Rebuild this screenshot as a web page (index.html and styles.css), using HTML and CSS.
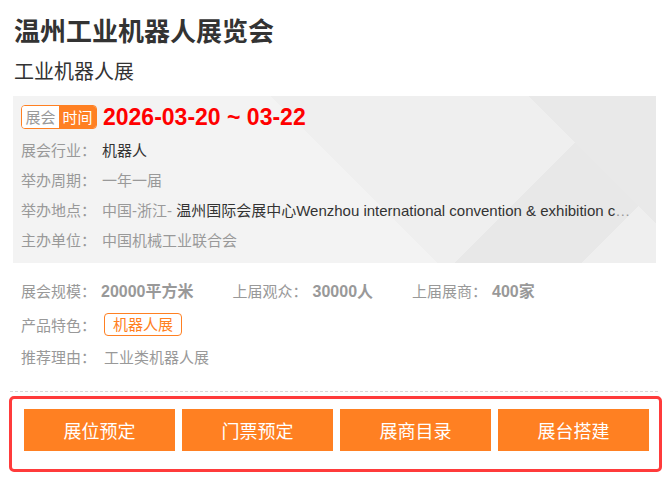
FILE: index.html
```html
<!DOCTYPE html>
<html lang="zh-CN">
<head>
<meta charset="utf-8">
<title>温州工业机器人展览会</title>
<link rel="stylesheet" href="styles.css">
</head>
<body>
<div class="page">
  <div class="header">
    <h1 class="title">温州工业机器人展览会</h1>
    <div class="subtitle">工业机器人展</div>
  </div>

  <div class="info-box">
    <div class="date-row">
      <span class="badge"><span class="badge-l">展会</span><span class="badge-r">时间</span></span>
      <span class="date">2026-03-20 ~ 03-22</span>
    </div>
    <div class="row"><span class="label">展会行业：</span><span class="val dark">机器人</span></div>
    <div class="row"><span class="label">举办周期：</span><span class="val">一年一届</span></div>
    <div class="row"><span class="label">举办地点：</span><span class="val clip"><span>中国-浙江- </span><span class="dark">温州国际会展中心Wenzhou international convention &amp; exhibition center</span></span></div>
    <div class="row"><span class="label">主办单位：</span><span class="val">中国机械工业联合会</span></div>
  </div>

  <div class="stats">
    <div class="stat-row">
      <span class="stat"><span class="slabel">展会规模：</span><b class="sval">20000平方米</b></span>
      <span class="stat"><span class="slabel">上届观众：</span><b class="sval">30000人</b></span>
      <span class="stat"><span class="slabel">上届展商：</span><b class="sval">400家</b></span>
    </div>
    <div class="tag-row">
      <span class="label2">产品特色：</span><span class="tag">机器人展</span>
    </div>
    <div class="reason-row">
      <span class="label2">推荐理由：</span><span class="reason">工业类机器人展</span>
    </div>
  </div>

  <div class="divider"></div>

  <div class="actions">
    <a class="btn">展位预定</a>
    <a class="btn">门票预定</a>
    <a class="btn">展商目录</a>
    <a class="btn">展台搭建</a>
  </div>
</div>
</body>
</html>
```

FILE: styles.css
```css
* { box-sizing: border-box; }
body {
  margin: 0;
  background: #fff;
  font-family: "Liberation Sans", "Noto Sans CJK SC", sans-serif;
  color: #333;
}
.page {
  width: 671px;
  padding: 0 9px;
}
.header {
  padding: 14px 0 0 5px;
}
.title {
  margin: 0;
  font-size: 26px;
  line-height: 36px;
  font-weight: bold;
  color: #333;
}
.subtitle {
  margin-top: 8px;
  font-size: 20px;
  line-height: 28px;
  color: #333;
}
.info-box {
  margin: 10px 6px 0 4px;
  padding: 6px 8px 6px 8px;
  height: 167px;
  background-color: #efefef;
  background-image:
    linear-gradient(225deg, #e9e9e9 0, #e9e9e9 90px, transparent 90px),
    linear-gradient(135deg, transparent 0, transparent 430px, #e8e8e8 430px, #e8e8e8 520px, transparent 520px),
    linear-gradient(45deg, #f3f3f3 0, #f3f3f3 300px, transparent 300px),
    linear-gradient(135deg, #ebebeb 0, #ebebeb 40px, transparent 40px);
}
.date-row {
  height: 30px;
  display: flex;
  align-items: center;
  margin-bottom: 4px;
}
.badge {
  display: inline-flex;
  height: 24px;
  border: 1px solid #ff8022;
  border-radius: 4px;
  overflow: hidden;
  font-size: 15px;
  line-height: 22px;
  font-family: "Noto Sans CJK SC", sans-serif;
}
.badge-l {
  width: 37px;
  background: #fff;
  color: #999;
  text-align: center;
}
.badge-r {
  width: 37px;
  background: #ff8022;
  color: #fff;
  text-align: center;
}
.date {
  margin-left: 6px;
  color: #ff0000;
  font-weight: bold;
  font-size: 23px;
  line-height: 30px;
}
.row {
  display: flex;
  height: 30px;
  line-height: 30px;
  font-size: 15px;
  white-space: nowrap;
}
.label {
  flex: none;
  width: 81px;
  color: #999;
}
.val { color: #999; }
.dark { color: #333; }
.clip {
  overflow: hidden;
  text-overflow: ellipsis;
  white-space: nowrap;
  min-width: 0;
  padding-right: 10px;
}
.stats {
  margin-top: 14px;
  padding-left: 12px;
  font-size: 15px;
}
.stat-row {
  display: flex;
  height: 30px;
  line-height: 30px;
}
.stat { margin-right: 39px; }
.slabel { color: #999; }
.sval {
  margin-left: 5px;
  color: #999;
  font-weight: bold;
  font-size: 16px;
}
.tag-row {
  display: flex;
  align-items: center;
  height: 34px;
}
.label2 {
  width: 83px;
  flex: none;
  color: #999;
}
.tag {
  display: inline-block;
  height: 23px;
  line-height: 21px;
  padding: 0 8px;
  border: 1px solid #ff8022;
  border-radius: 4px;
  color: #ff8022;
  font-size: 15px;
}
.reason-row {
  display: flex;
  height: 30px;
  line-height: 30px;
  margin-top: 2px;
}
.reason { color: #999; }
.divider {
  margin: 18px 4px 0 1px;
  border-top: 1px dashed #d8d8d8;
}
.actions {
  margin-top: 4px;
  border: 3px solid #ff3b3b;
  border-radius: 5px;
  padding: 10px 10px 18px 12px;
  display: grid;
  grid-template-columns: repeat(4, 1fr);
  gap: 7px;
}
.btn {
  display: block;
  height: 42px;
  line-height: 42px;
  background: #ff8022;
  color: #fff;
  text-align: center;
  font-size: 18px;
  font-family: "Noto Sans CJK SC", sans-serif;
  cursor: pointer;
}
```
